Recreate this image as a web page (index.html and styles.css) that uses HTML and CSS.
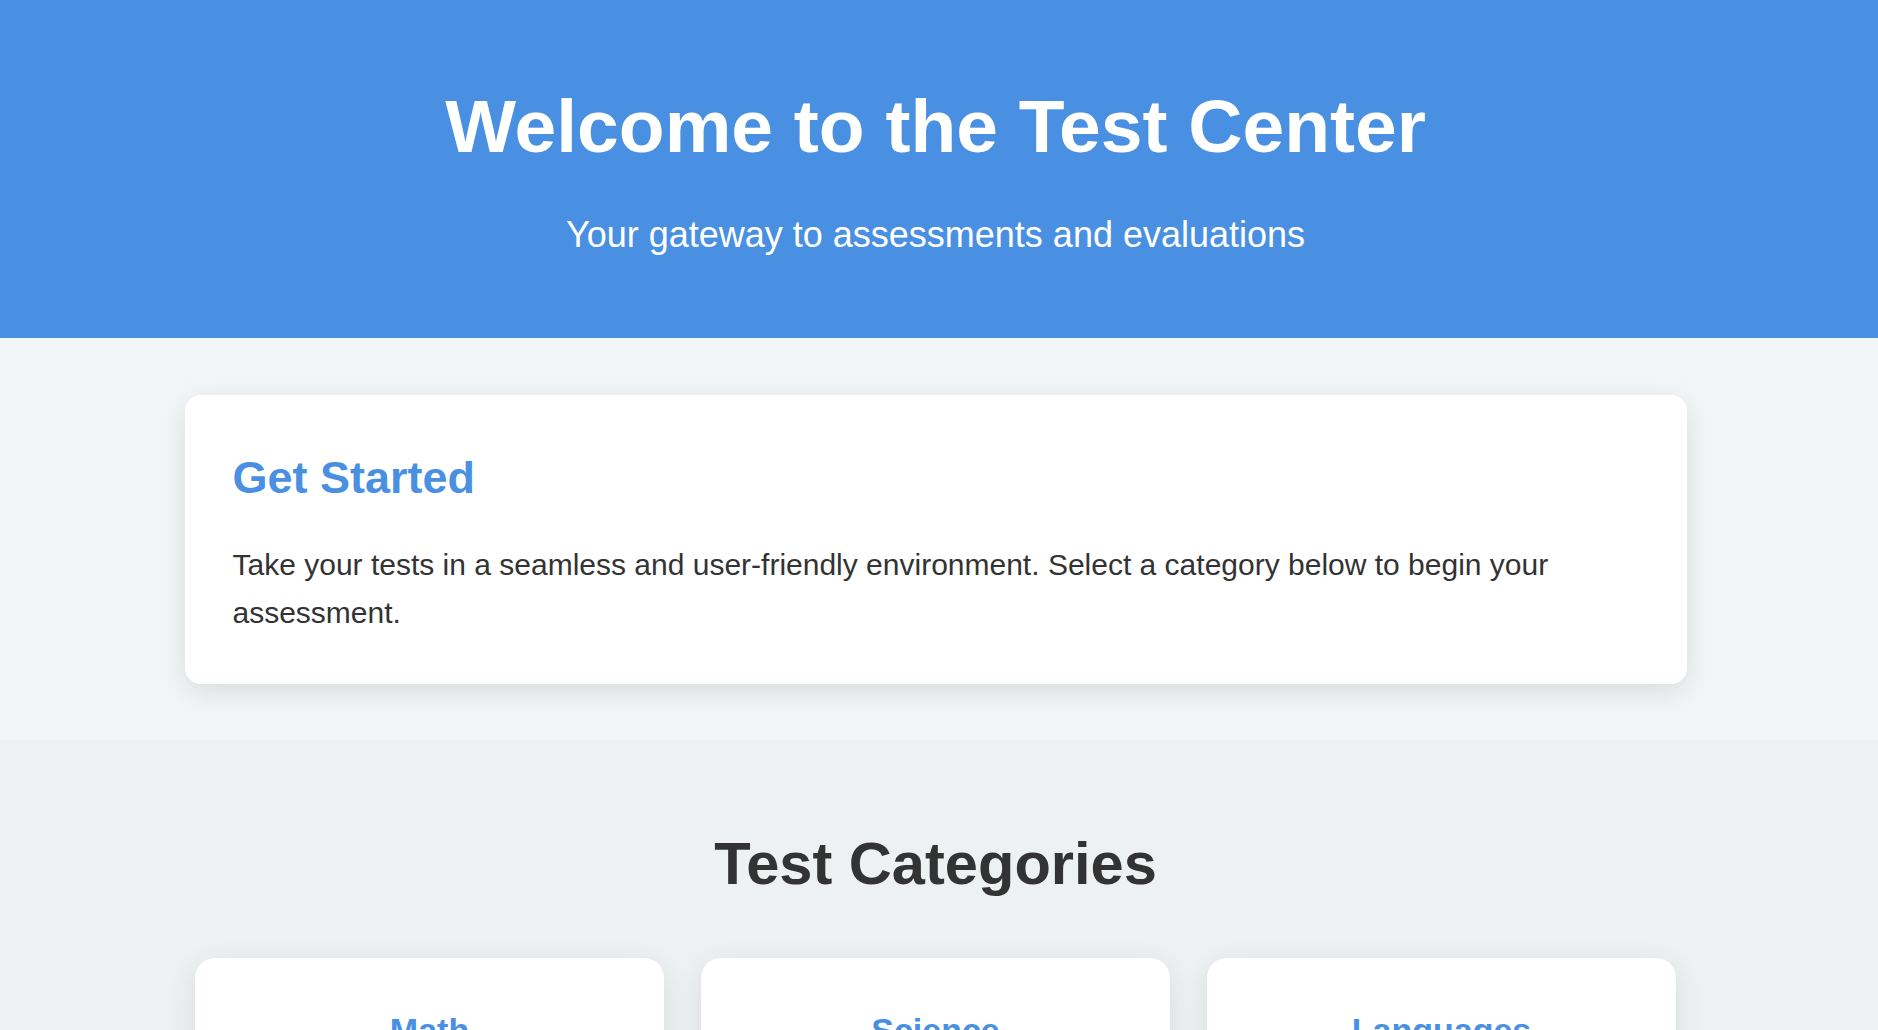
FILE: index.html
```html
<!DOCTYPE html>
<html lang="en">
<head>
<meta charset="UTF-8">
<title>Test Center</title>
<link rel="stylesheet" href="styles.css">
</head>
<body>
<header class="hero">
  <h1 class="hero-title">Welcome to the Test Center</h1>
  <p class="hero-subtitle">Your gateway to assessments and evaluations</p>
</header>

<section class="intro">
  <div class="intro-card">
    <h2 class="intro-title">Get Started</h2>
    <p class="intro-text">Take your tests in a seamless and user-friendly environment. Select a category below to begin your assessment.</p>
  </div>
</section>

<section class="categories">
  <h2 class="categories-title">Test Categories</h2>
  <div class="category-grid">
    <div class="category-card">
      <h3 class="category-name">Math</h3>
      <p class="category-desc">Algebra, geometry, calculus and more.</p>
      <a class="category-btn" href="#">Start Test</a>
    </div>
    <div class="category-card">
      <h3 class="category-name">Science</h3>
      <p class="category-desc">Physics, chemistry and biology.</p>
      <a class="category-btn" href="#">Start Test</a>
    </div>
    <div class="category-card">
      <h3 class="category-name">Languages</h3>
      <p class="category-desc">Grammar, vocabulary and comprehension.</p>
      <a class="category-btn" href="#">Start Test</a>
    </div>
  </div>
</section>
</body>
</html>
```
FILE: styles.css
```css
* {
  box-sizing: border-box;
}

html, body {
  margin: 0;
  padding: 0;
}

body {
  font-family: "Liberation Sans", Arial, sans-serif;
  background: #f3f6f7;
  color: #333333;
}

.hero {
  background: #4a90e2;
  color: #ffffff;
  text-align: center;
  height: 338px;
  padding: 84px 7px 0 0;
}

.hero-title {
  margin: 0;
  font-size: 75px;
  font-weight: 700;
  line-height: 85px;
}

.hero-subtitle {
  margin: 45px 0 0;
  font-size: 36px;
  line-height: 41px;
}

.intro {
  background: #f3f6f7;
  padding: 57px 7px 56px 0;
}

.intro-card {
  width: 1502px;
  margin: 0 auto;
  background: #ffffff;
  border-radius: 16px;
  padding: 57px 48px 47px;
  box-shadow: 0 8px 30px rgba(0, 0, 0, 0.11);
}

.intro-title {
  margin: 0 0 38px;
  color: #4a90e2;
  font-size: 45px;
  font-weight: 700;
  line-height: 51px;
}

.intro-text {
  margin: 0;
  font-size: 30px;
  line-height: 48px;
  color: #333333;
}

.categories {
  background: #edf1f2;
  padding: 90px 7px 80px 0;
  text-align: center;
}

.categories-title {
  margin: 0 0 60px;
  font-size: 59.6px;
  font-weight: 700;
  line-height: 68px;
  color: #333333;
}

.category-grid {
  display: flex;
  justify-content: center;
  gap: 37px;
}

.category-card {
  width: 469px;
  background: #ffffff;
  border-radius: 20px;
  padding: 53px 36px 48px;
  box-shadow: 0 8px 30px rgba(0, 0, 0, 0.09);
}

.category-name {
  margin: 0 0 24px;
  color: #4a90e2;
  font-size: 34px;
  font-weight: 700;
  line-height: 39px;
}

.category-desc {
  margin: 0 0 32px;
  font-size: 24px;
  line-height: 38px;
  color: #555555;
}

.category-btn {
  display: inline-block;
  padding: 14px 36px;
  background: #4a90e2;
  color: #ffffff;
  text-decoration: none;
  border-radius: 8px;
  font-size: 24px;
}
```
